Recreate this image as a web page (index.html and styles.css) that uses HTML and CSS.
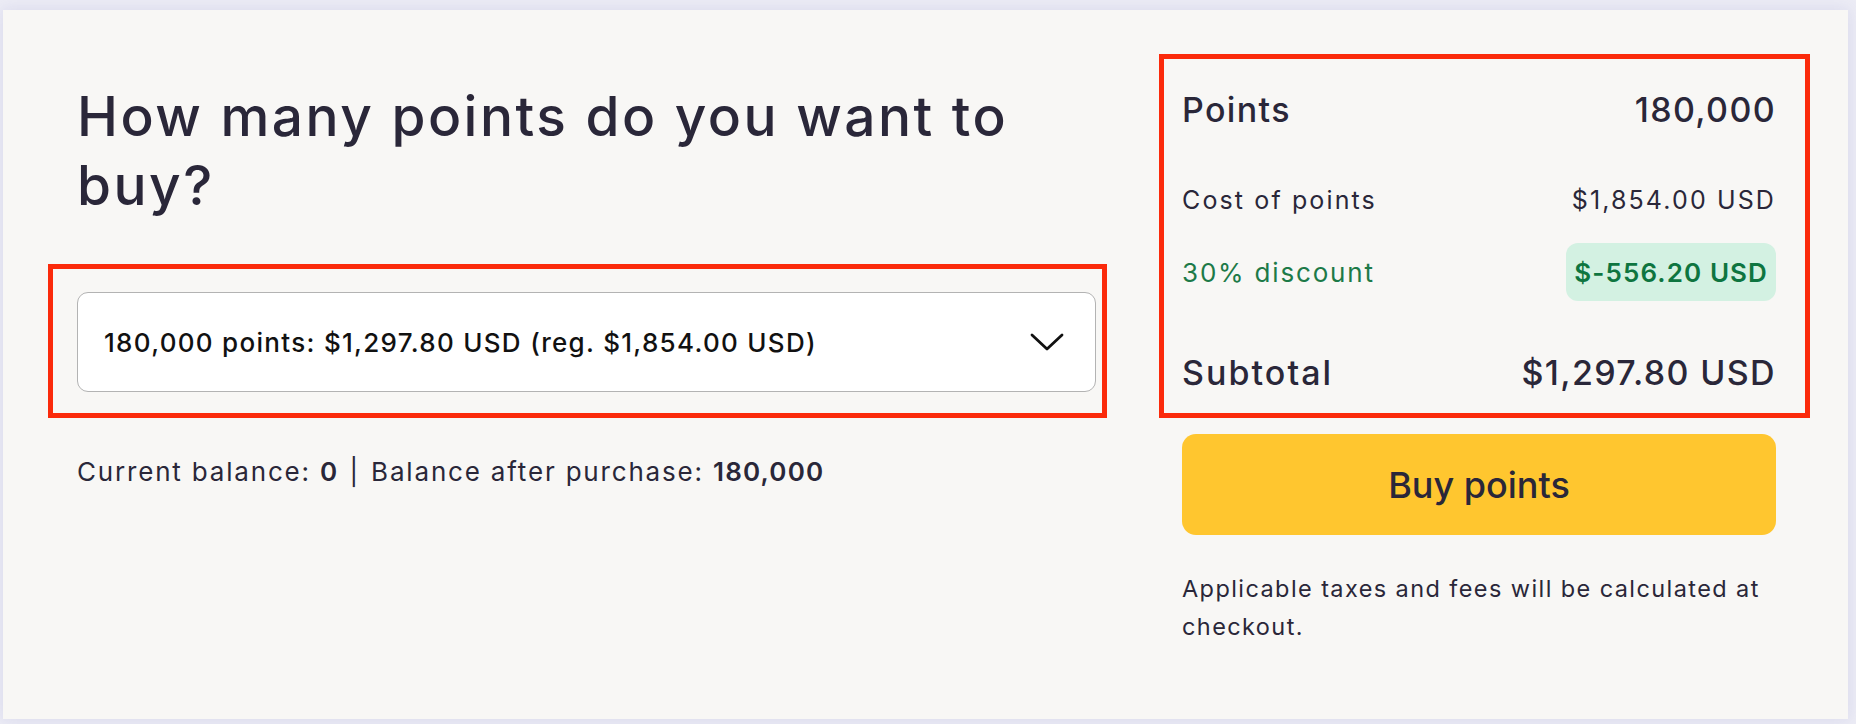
FILE: index.html
```html
<!DOCTYPE html>
<html lang="en">
<head>
    <meta charset="UTF-8">
    <meta name="viewport" content="width=device-width, initial-scale=1.0">
    <title>Buy Points</title>
    <link rel="stylesheet" href="styles.css">
</head>
<body>

    <main class="card">
        <section class="picker">
            <h1 class="title">How many points do you want to buy?</h1>

            <div class="select-wrap">
                <span class="mark mark-select"></span>
                <div class="select">
                    <span>180,000 points: $1,297.80 USD (reg. $1,854.00 USD)</span>
                    <svg class="chevron" width="36" height="20" viewBox="0 0 36 20">
                        <path d="M3 3 L18 17 L33 3" fill="none" stroke="#111" stroke-width="2.8" stroke-linecap="round" stroke-linejoin="round"/>
                    </svg>
                </div>
            </div>

            <p class="balance">Current balance: <b>0</b> <span class="sep">|</span> Balance after purchase: <b>180,000</b></p>
        </section>

        <aside class="order">
            <div class="summary">
                <span class="mark mark-summary"></span>
                <div class="row row-big row-points">
                    <span>Points</span>
                    <span>180,000</span>
                </div>
                <div class="row row-cost">
                    <span>Cost of points</span>
                    <span>$1,854.00 USD</span>
                </div>
                <div class="row row-discount">
                    <span>30% discount</span>
                    <span class="badge">$-556.20 USD</span>
                </div>
                <div class="row row-big row-subtotal">
                    <span class="label">Subtotal</span>
                    <span>$1,297.80 USD</span>
                </div>
            </div>

            <button class="buy">Buy points</button>

            <p class="note">Applicable taxes and fees will be calculated at checkout.</p>
        </aside>
    </main>

</body>
</html>
```

FILE: styles.css
```css
* {
    box-sizing: border-box;
    margin: 0;
    padding: 0;
}
body {
    background-color: #ececf5;
    padding: 10px 8px 5px 3px;
    font-family: 'Inter', 'Liberation Sans', sans-serif;
    color: #2a2739;
}
.card {
    height: 709px;
    background-color: #f8f7f5;
    box-shadow: 0 0 14px rgba(110, 110, 190, 0.16);
    display: flex;
    align-items: flex-start;
    gap: 86px;
    padding-left: 74px;
}

/* left column */
.picker {
    width: 1019px;
    padding-top: 72px;
}
.title {
    font-size: 55px;
    line-height: 69px;
    font-weight: 500;
    letter-spacing: 0.045em;
    max-width: 990px;
    color: #2a2739;
}
.select-wrap {
    position: relative;
    margin-top: 72px;
}
.select {
    height: 100px;
    background-color: #fff;
    border: 1px solid #b3b3b3;
    border-radius: 11px;
    display: flex;
    justify-content: space-between;
    align-items: center;
    padding: 0 30px 0 26px;
    font-size: 26px;
    font-weight: 500;
    letter-spacing: 0.05em;
    color: #111;
}
.chevron {
    display: block;
}
.balance {
    margin-top: 60px;
    font-size: 26px;
    line-height: 39px;
    letter-spacing: 0.07em;
}
.balance b {
    font-weight: 600;
    letter-spacing: 0.045em;
}
.sep {
    margin: 0 2px;
}

/* annotation boxes */
.mark {
    position: absolute;
    border: 5px solid #fb2a0b;
    pointer-events: none;
}
.mark-select {
    top: -28px;
    right: -11px;
    bottom: -26px;
    left: -29px;
}
.mark-summary {
    top: -35px;
    right: -34px;
    bottom: -26px;
    left: -23px;
}

/* right column */
.order {
    width: 594px;
    padding-top: 79px;
}
.summary {
    position: relative;
}
.row {
    display: flex;
    justify-content: space-between;
    align-items: center;
    height: 40px;
    font-size: 25px;
    letter-spacing: 0.085em;
}
.row-big {
    font-size: 34px;
    font-weight: 500;
    letter-spacing: 0.04em;
}
.row-big .label {
    letter-spacing: 0.06em;
}
.row-cost {
    margin-top: 51px;
}
.row-discount {
    margin-top: 23px;
    height: 58px;
    font-size: 26px;
    letter-spacing: 0.07em;
    color: #1d7a48;
}
.badge {
    background-color: #d3f1e2;
    color: #0e7540;
    font-weight: 600;
    letter-spacing: 0.042em;
    border-radius: 12px;
    height: 58px;
    padding: 0 8px;
    display: flex;
    align-items: center;
}
.row-subtotal {
    margin-top: 51px;
}
.buy {
    display: block;
    width: 100%;
    height: 101px;
    margin-top: 42px;
    background-color: #ffc62f;
    border: none;
    border-radius: 14px;
    font-family: inherit;
    font-size: 36px;
    font-weight: 500;
    color: #2a2739;
    cursor: pointer;
}
.note {
    margin-top: 35px;
    font-size: 23.5px;
    line-height: 38px;
    letter-spacing: 0.06em;
}
```
